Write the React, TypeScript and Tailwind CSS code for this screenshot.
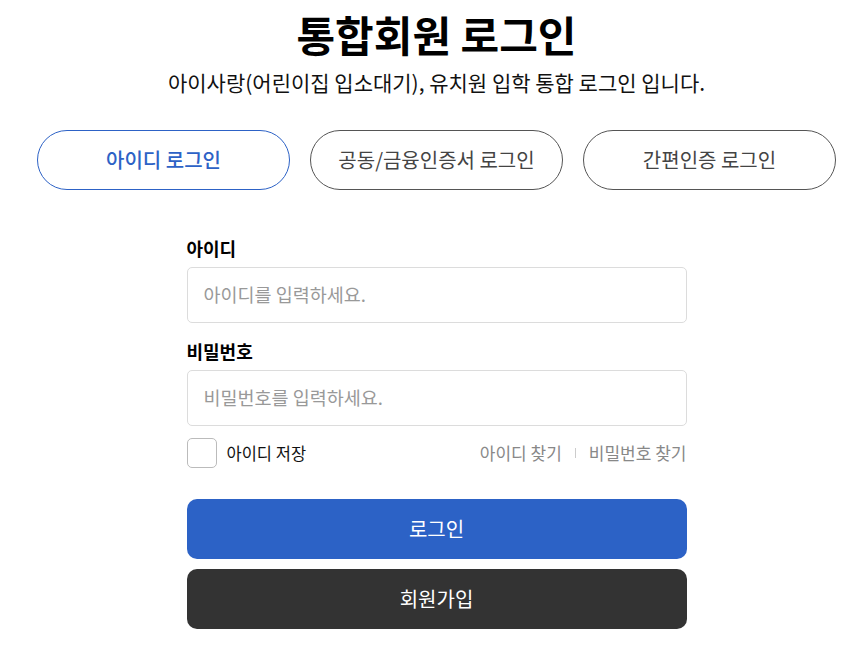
import React from "react";

export default function App() {
  const font = { fontFamily: '"Noto Sans CJK KR", "Noto Sans", sans-serif' };
  return (
    <div className="w-[868px] h-[656px] bg-white overflow-hidden" style={font}>
      <div className="w-[799px] ml-[37px] flex flex-col items-center">
        <h1 className="mt-[5px] text-[42px] leading-[58px] font-bold text-black">통합회원 로그인</h1>
        <p className="mt-[5px] text-[21px] leading-[28px] text-[#111]">아이사랑(어린이집 입소대기), 유치원 입학 통합 로그인 입니다.</p>
        <div className="mt-[34px] w-full flex gap-[20px]">
          <button className="flex-1 h-[60px] rounded-full border border-[#2d62c6] text-[#2d62c6] text-[20px] font-medium">아이디 로그인</button>
          <button className="flex-1 h-[60px] rounded-full border border-[#555] text-[#444] text-[20px]">공동/금융인증서 로그인</button>
          <button className="flex-1 h-[60px] rounded-full border border-[#555] text-[#444] text-[20px]">간편인증 로그인</button>
        </div>
        <div className="mt-[45px] w-[500px] flex flex-col">
          <label className="text-[18px] leading-[26px] font-bold text-black">아이디</label>
          <div className="mt-[6px] h-[56px] rounded-[5px] border border-[#dcdcdc] flex items-center px-[16px] text-[18.5px] text-[#999]">아이디를 입력하세요.</div>
          <label className="mt-[15px] text-[18px] leading-[26px] font-bold text-black">비밀번호</label>
          <div className="mt-[6px] h-[56px] rounded-[5px] border border-[#dcdcdc] flex items-center px-[16px] text-[18.5px] text-[#999]">비밀번호를 입력하세요.</div>
          <div className="mt-[12px] flex items-center justify-between">
            <div className="flex items-center gap-[10px]">
              <div className="w-[30px] h-[30px] rounded-[5px] border border-[#bbb]" />
              <span className="text-[16.5px] text-[#111]">아이디 저장</span>
            </div>
            <div className="flex items-center text-[17px] text-[#888]">
              <span>아이디 찾기</span>
              <span className="mx-[13px] w-px h-[10px] bg-[#ccc]" />
              <span>비밀번호 찾기</span>
            </div>
          </div>
          <button className="mt-[31px] h-[60px] rounded-[10px] bg-[#2c62c6] text-white text-[20px]">로그인</button>
          <button className="mt-[10px] h-[60px] rounded-[10px] bg-[#333333] text-white text-[20px]">회원가입</button>
        </div>
      </div>
    </div>
  );
}
